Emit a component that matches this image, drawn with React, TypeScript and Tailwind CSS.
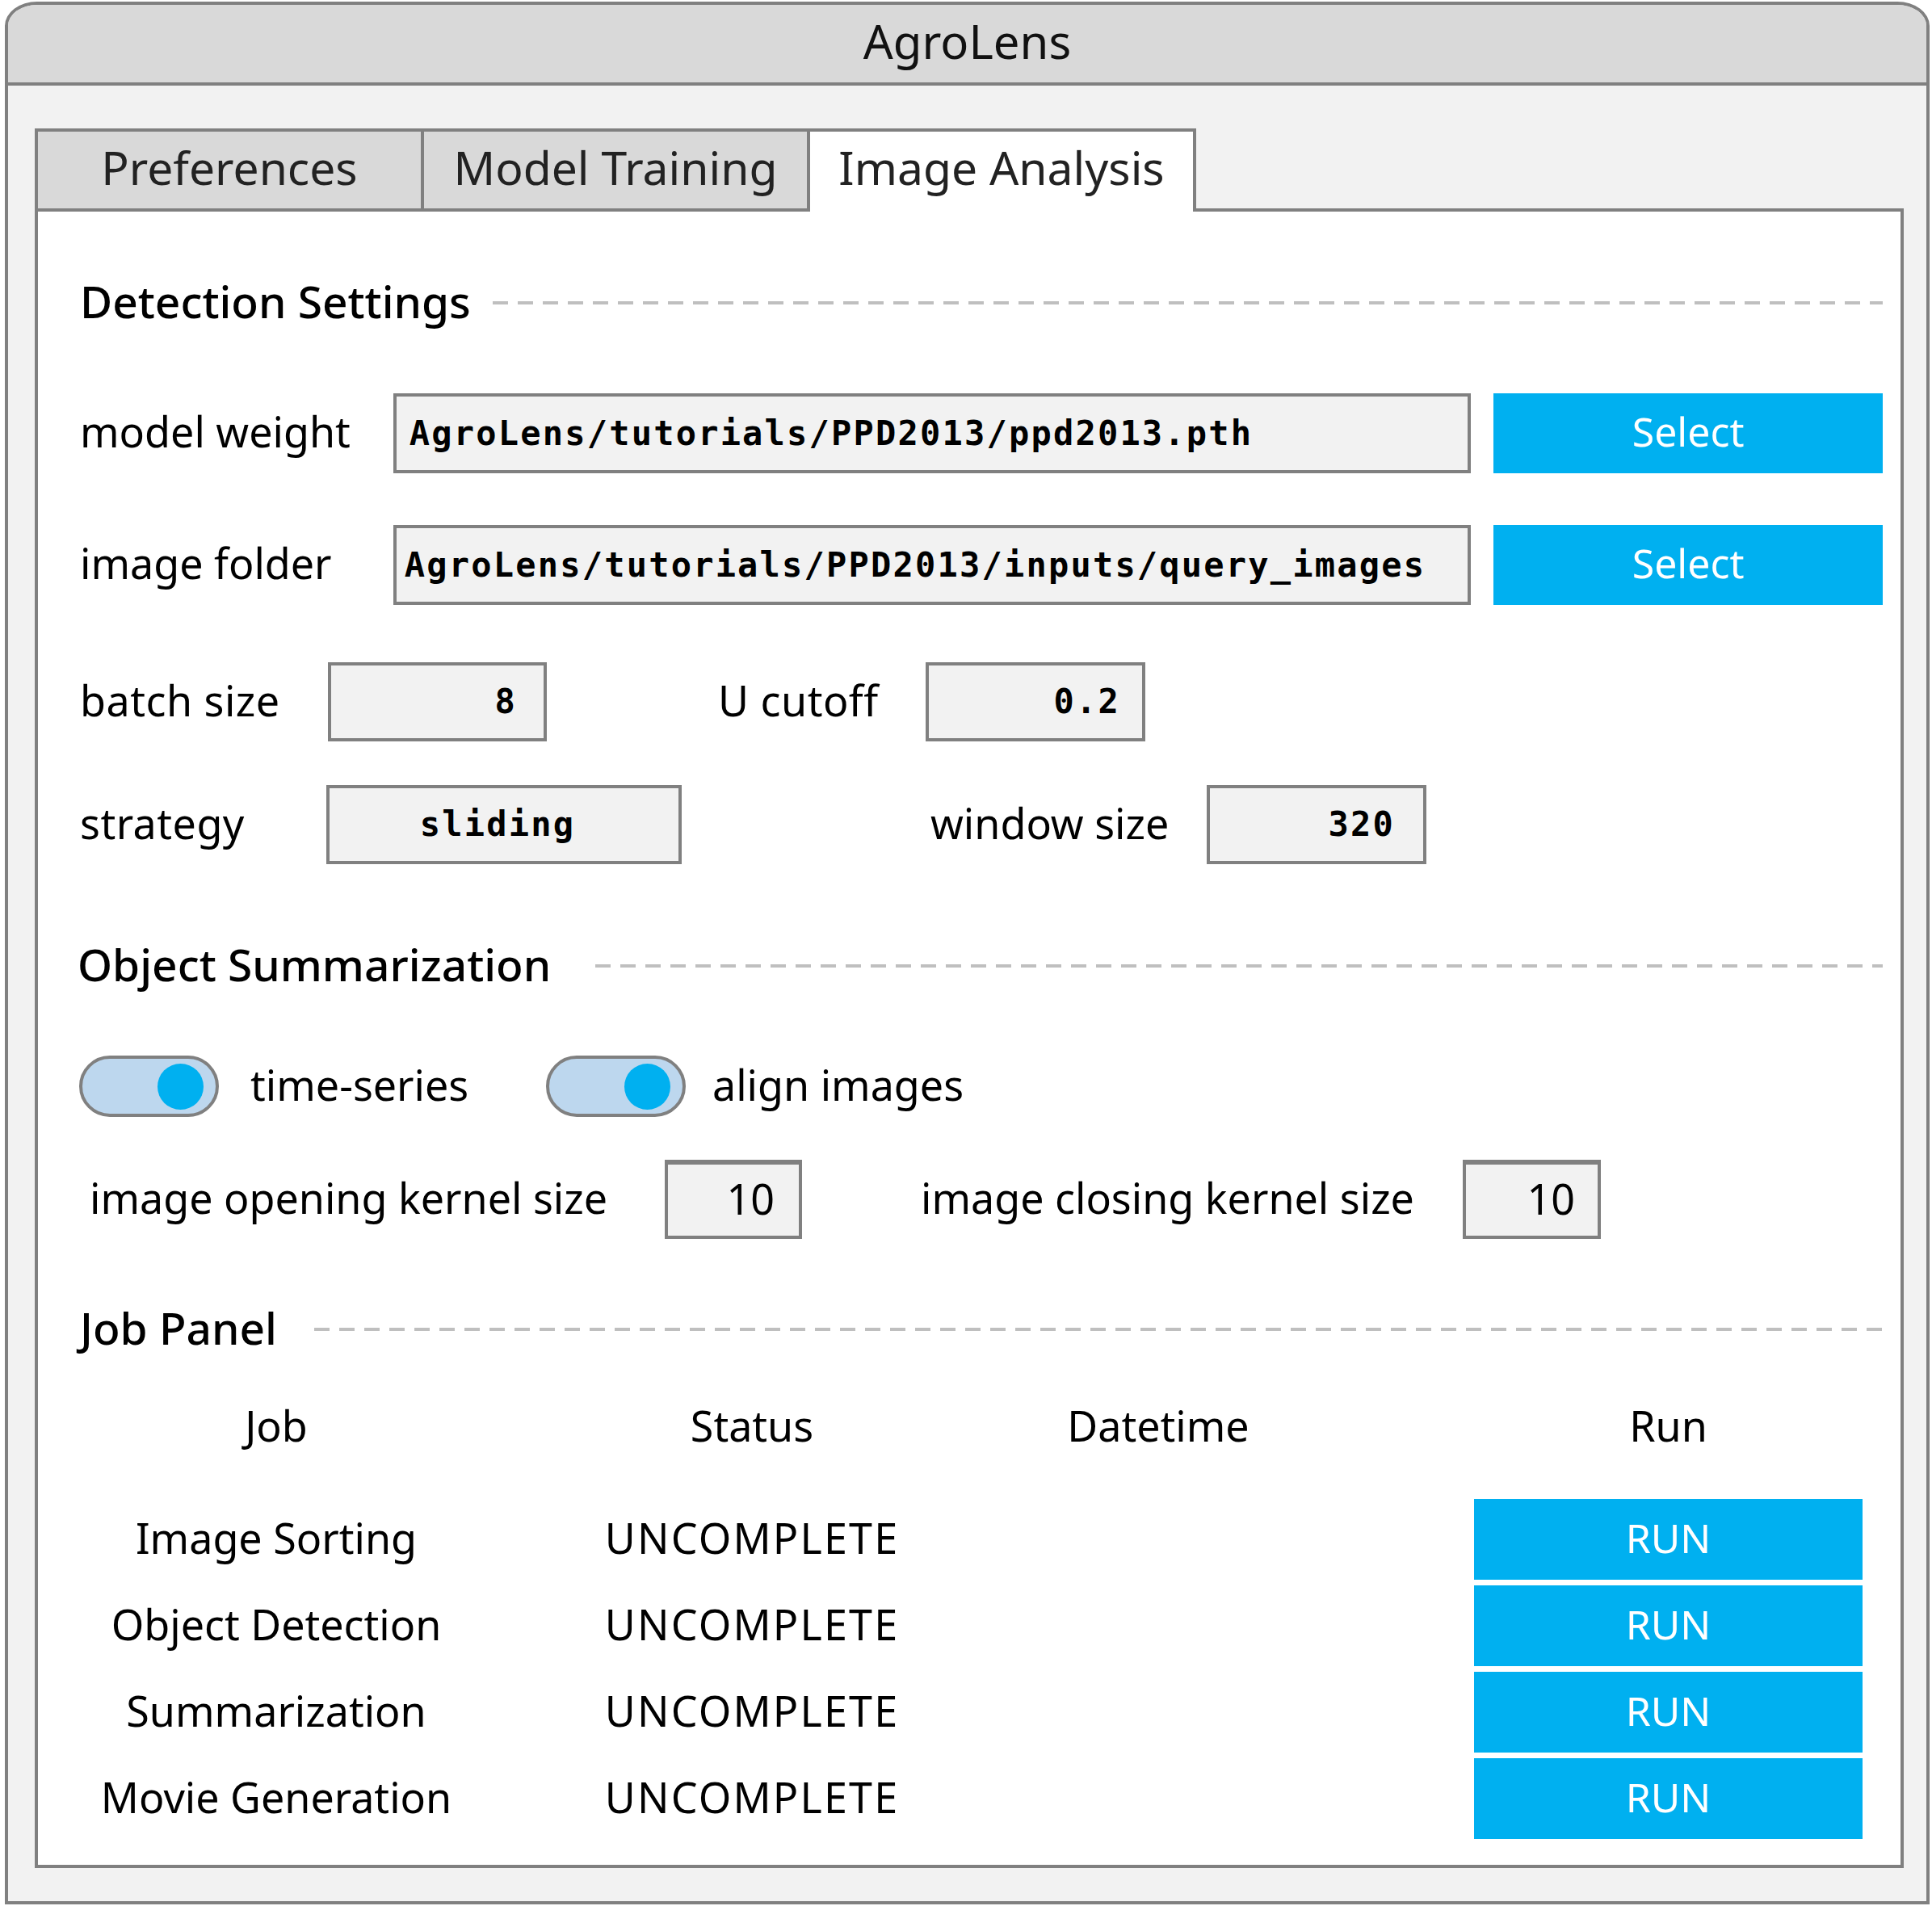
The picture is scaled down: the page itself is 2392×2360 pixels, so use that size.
import React from "react";

const LBL = "text-[52px] leading-none text-black whitespace-nowrap pb-[5px]";
const BOX = "h-full bg-[#f2f2f2] border-4 border-[#808080] flex items-center";
const MONO = "font-['DejaVu_Sans_Mono',monospace] font-bold text-[42px] tracking-[2.2px] text-black whitespace-nowrap leading-none";
const DASH =
  "flex-1 h-[4px] bg-[image:repeating-linear-gradient(90deg,#bfbfbf_0px,#bfbfbf_19px,transparent_19px,transparent_31px)]";

function Heading({ title, w, ml = "" }: { title: string; w: string; ml?: string }) {
  return (
    <div className="h-[80px] flex items-center">
      <div className={`${w} ${ml} text-[55px] font-medium leading-none text-black whitespace-nowrap pb-[5px]`}>{title}</div>
      <div className={DASH} />
    </div>
  );
}

function Toggle() {
  return (
    <div className="w-[173px] h-[76px] shrink-0 rounded-full border-4 border-[#808080] bg-[#bdd7ee] flex items-center justify-end pr-[15px]">
      <div className="w-[57px] h-[57px] rounded-full bg-[#00b0f0]" />
    </div>
  );
}

const jobs = ["Image Sorting", "Object Detection", "Summarization", "Movie Generation"];

export default function App() {
  return (
    <div className="w-[2392px] h-[2360px] bg-white pt-[2px] pl-[6px] font-['Noto_Sans',sans-serif]">
      <div className="w-[2383px] h-[2356px] border-4 border-[#808080] bg-[#f2f2f2] rounded-tl-[40px_30px] rounded-tr-[40px_30px] overflow-hidden flex flex-col">
        {/* title bar */}
        <div className="h-[100px] shrink-0 bg-[#d9d9d9] border-b-4 border-[#808080] flex items-center justify-center">
          <span className="text-[58px] leading-none text-[#111] pb-[6px]">AgroLens</span>
        </div>

        {/* body */}
        <div className="pl-[33px] pt-[53px]">
          {/* tabs */}
          <div className="flex items-end relative z-10">
            <div className="w-[482px] h-[99px] bg-[#d9d9d9] border-4 border-b-0 border-[#808080] flex items-center justify-center">
              <span className="text-[57px] leading-none text-[#222] pb-[6px]">Preferences</span>
            </div>
            <div className="w-[482px] h-[99px] -ml-[4px] bg-[#d9d9d9] border-4 border-b-0 border-[#808080] flex items-center justify-center">
              <span className="text-[57px] leading-none text-[#222] pb-[6px]">Model Training</span>
            </div>
            <div className="w-[482px] h-[103px] -ml-[4px] -mb-[4px] pb-[4px] bg-white border-4 border-b-0 border-[#808080] flex items-center justify-center">
              <span className="text-[57px] leading-none text-[#222] pb-[6px]">Image Analysis</span>
            </div>
          </div>

          {/* panel */}
          <div className="w-[2314px] bg-white border-4 border-[#808080] pl-[52px] pr-[22px] pt-[73px] pb-[32px] flex flex-col">
            <Heading title="Detection Settings" w="w-[511px]" />

            {/* model weight */}
            <div className="h-[99px] mt-[72px] flex items-center">
              <div className={`${LBL} w-[388px]`}>model weight</div>
              <div className={`${BOX} w-[1335px] pl-[16px]`}>
                <span className={MONO}>AgroLens/tutorials/PPD2013/ppd2013.pth</span>
              </div>
              <div className="ml-[28px] w-[482px] h-full bg-[#00b0f0] flex items-center justify-center">
                <span className="text-[50px] leading-none text-white pb-[5px]">Select</span>
              </div>
            </div>

            {/* image folder */}
            <div className="h-[99px] mt-[64px] flex items-center">
              <div className={`${LBL} w-[388px]`}>image folder</div>
              <div className={`${BOX} w-[1335px] pl-[10px] overflow-hidden`}>
                <span className={MONO}>AgroLens/tutorials/PPD2013/inputs/query_images</span>
              </div>
              <div className="ml-[28px] w-[482px] h-full bg-[#00b0f0] flex items-center justify-center">
                <span className="text-[50px] leading-none text-white pb-[5px]">Select</span>
              </div>
            </div>

            {/* batch size / U cutoff */}
            <div className="h-[98px] mt-[71px] flex items-center">
              <div className={`${LBL} w-[307px] tracking-[0.5px]`}>batch size</div>
              <div className={`${BOX} w-[271px] justify-end pr-[33px]`}>
                <span className={MONO}>8</span>
              </div>
              <div className={`${LBL} ml-[212px] w-[257px] tracking-[0.5px]`}>U cutoff</div>
              <div className={`${BOX} w-[272px] justify-end pr-[27px]`}>
                <span className={MONO}>0.2</span>
              </div>
            </div>

            {/* strategy / window size */}
            <div className="h-[98px] mt-[54px] flex items-center">
              <div className={`${LBL} w-[305px] tracking-[0.5px]`}>strategy</div>
              <div className={`${BOX} w-[440px] justify-center pr-[16px]`}>
                <span className={MONO}>sliding</span>
              </div>
              <div className={`${LBL} ml-[308px] w-[342px]`}>window size</div>
              <div className={`${BOX} w-[272px] justify-end pr-[35px]`}>
                <span className={MONO}>320</span>
              </div>
            </div>

            <div className="mt-[86px]">
              <Heading title="Object Summarization" w="w-[641px]" ml="-ml-[3px]" />
            </div>

            {/* toggles */}
            <div className="h-[76px] mt-[71px] flex items-center">
              <div className="-ml-[1px]">
                <Toggle />
              </div>
              <div className={`${LBL} ml-[39px] w-[366px]`}>time-series</div>
              <Toggle />
              <div className={`${LBL} ml-[33px]`}>align images</div>
            </div>

            {/* kernel sizes */}
            <div className="h-[98px] mt-[53px] flex items-center">
              <div className={`${LBL} ml-[12px] w-[712px]`}>image opening kernel size</div>
              <div className="h-full w-[170px] bg-[#f2f2f2] border-4 border-t-[6px] border-[#808080] flex items-center justify-end pr-[30px]">
                <span className="text-[52px] leading-none text-black pb-[5px]">10</span>
              </div>
              <div className={`${LBL} ml-[147px] w-[671px]`}>image closing kernel size</div>
              <div className="h-full w-[171px] bg-[#f2f2f2] border-4 border-t-[6px] border-[#808080] flex items-center justify-end pr-[28px]">
                <span className="text-[52px] leading-none text-black pb-[5px]">10</span>
              </div>
            </div>

            <div className="mt-[72px]">
              <Heading title="Job Panel" w="w-[290px]" />
            </div>

            {/* table header */}
            <div className="h-[80px] mt-[41px] flex items-center">
              <div className={`${LBL} w-[486px] text-center`}>Job</div>
              <div className={`${LBL} w-[692px] text-center`}>Status</div>
              <div className={`${LBL} w-[314px] text-center`}>Datetime</div>
              <div className={`${LBL} ml-[234px] w-[481px] text-center`}>Run</div>
            </div>

            {/* rows */}
            <div className="mt-[49px] flex flex-col gap-[7px]">
              {jobs.map((j) => (
                <div key={j} className="h-[100px] flex items-center">
                  <div className={`${LBL} w-[486px] text-center`}>{j}</div>
                  <div className={`${LBL} w-[692px] text-center tracking-[2.2px]`}>UNCOMPLETE</div>
                  <div className="w-[314px]" />
                  <div className="ml-[234px] w-[481px] h-full bg-[#00b0f0] flex items-center justify-center">
                    <span className="text-[50px] leading-none text-white pb-[5px]">RUN</span>
                  </div>
                </div>
              ))}
            </div>
          </div>
        </div>
      </div>
    </div>
  );
}
